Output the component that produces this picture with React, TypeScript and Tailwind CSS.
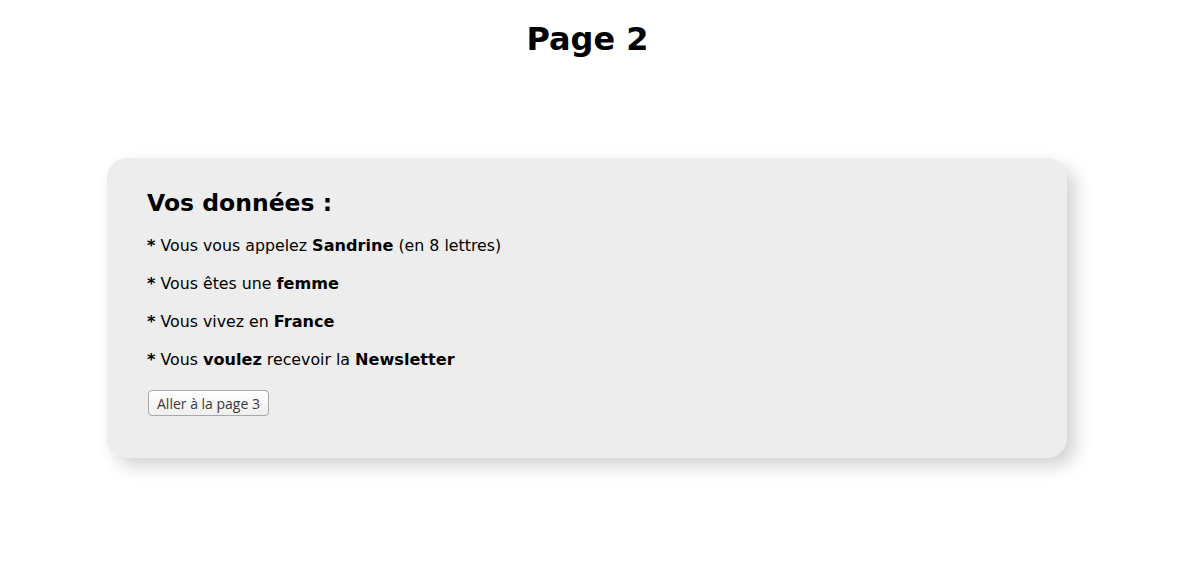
export default function App() {
  const B = ({ children }: { children: React.ReactNode }) => (
    <b className="text-[16.1px]">{children}</b>
  );

  const items = [
    <>
      <B>*</B> Vous vous appelez <B>Sandrine</B> (en 8 lettres)
    </>,
    <>
      <B>*</B> Vous êtes une <B>femme</B>
    </>,
    <>
      <B>*</B> Vous vivez en <B>France</B>
    </>,
    <>
      <B>*</B> Vous <B>voulez</B> recevoir la <B>Newsletter</B>
    </>,
  ];

  return (
    <div className="min-h-[578px] bg-white text-black font-['DejaVu_Sans',sans-serif]">
      <h1 className="pt-[21px] pr-[4px] text-center text-[32px] leading-[37px] font-bold">Page 2</h1>

      <div className="ml-[107px] mt-[100px] w-[960px] rounded-[20px] bg-[#ededed] px-10 pt-[31px] pb-[42px] shadow-[8px_8px_18px_rgba(0,0,0,0.18)]">
        <h2 className="text-[23.5px] leading-[28px] font-bold">Vos données :</h2>

        <div className="mt-[18px] flex flex-col gap-4">
          {items.map((item, i) => (
            <p key={i} className="text-[15.8px] leading-[22px]">
              {item}
            </p>
          ))}
        </div>

        <button className="mt-[19px] ml-px h-[26px] rounded-[4px] border border-[#a8a8a8] bg-gradient-to-b from-white to-[#efefef] px-[8px] font-['Open_Sans',sans-serif] text-[14px] text-[#3a3a3a]">
          Aller à la page 3
        </button>
      </div>
    </div>
  );
}
